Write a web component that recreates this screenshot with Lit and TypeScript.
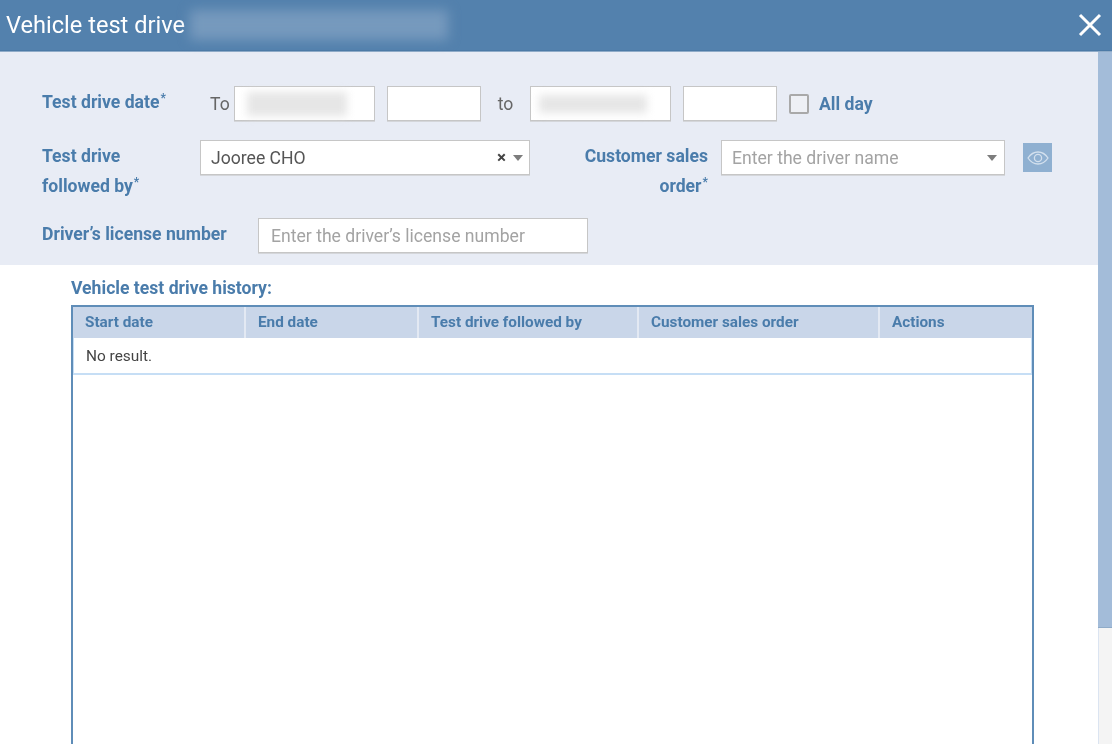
import { LitElement, html, css, svg } from "lit";
import { customElement } from "lit/decorators.js";

const caret = svg`<svg class="caret" width="10" height="6" viewBox="0 0 10 6"><path d="M0 0H10L5 6Z" fill="#7d7d7d"/></svg>`;

@customElement("app-root")
export class AppRoot extends LitElement {
  static styles = css`
    :host {
      display: flex;
      flex-direction: column;
      width: 1112px;
      height: 744px;
      overflow: hidden;
      background: #fff;
      font-family: Roboto, "Liberation Sans", sans-serif;
      color: #555;
      filter: blur(0.6px);
    }
    .header {
      flex: none;
      height: 51px;
      box-sizing: border-box;
      background: #5381ad;
      border-bottom: 1px solid #4c7aa6;
      display: flex;
      align-items: center;
      padding: 0 10px 0 6px;
      color: #fff;
      font-size: 23.6px;
    }
    .title-blur {
      width: 258px;
      height: 30px;
      margin-left: 5px;
      background: #7699bd;
      filter: blur(6px);
    }
    .close {
      margin-left: auto;
      display: block;
      background: none;
      border: 0;
      padding: 0;
      height: 24px;
    }
    .main {
      flex: 1;
      min-height: 0;
      display: flex;
      border-top: 1px solid #8fabc8;
    }
    .content {
      flex: 1;
      min-width: 0;
      overflow: hidden;
    }
    .scrollbar {
      flex: none;
      width: 14px;
      background: #f4f4f4;
      border-left: 1px solid #dbe4f1;
      box-sizing: border-box;
    }
    .thumb {
      height: 576px;
      margin-left: -1px;
      background: #a3bcd9;
      border-bottom: 1px solid #8fabc8;
      box-sizing: border-box;
    }
    .form {
      background: #e8ecf5;
      height: 213px;
      box-sizing: border-box;
      padding: 34px 0 0 42px;
    }
    .row {
      display: flex;
      align-items: flex-start;
    }
    .row1 {
      height: 35px;
      margin-bottom: 19px;
    }
    .row2 {
      height: 78px;
    }
    label {
      font-size: 17.6px;
      font-weight: 700;
      color: #4a7cab;
      line-height: 30px;
    }
    sup {
      font-size: 12px;
      line-height: 0;
      vertical-align: 6px;
      margin-left: 1px;
    }
    .l-date { width: 168px; margin-top: 1px; }
    .to {
      font-size: 17.6px;
      line-height: 36px;
      color: #666;
    }
    .to-a { width: 24px; }
    .to-b { width: 49px; text-align: center; }
    .field {
      box-sizing: border-box;
      height: 35px;
      background: #fff;
      border: 1px solid #c6c6c6;
      box-shadow: 0 1px 0 #d4d6da;
      display: flex;
      align-items: center;
      padding: 0 10px;
      font-size: 17.6px;
      color: #555;
    }
    .placeholder { color: #a3a3a3; }
    .date { width: 141px; }
    .date-gap { margin-right: 12px; }
    .time { width: 94px; }
    .blur-value {
      height: 24px;
      background: #e6e6e6;
      filter: blur(4px);
    }
    .bv1 { width: 100px; margin-left: 2px; }
    .bv2 { width: 108px; height: 18px; margin-left: -2px; }
    .check {
      box-sizing: border-box;
      width: 20px;
      height: 20px;
      margin: 8px 10px 0 12px;
      background: #eef0f5;
      border: 2px solid #a9a9a9;
      border-radius: 2px;
    }
    .allday { line-height: 36px; }
    .l-follow { width: 158px; margin-top: 1px; }
    .select-a { width: 330px; padding-right: 6px; }
    .grow { flex: 1; white-space: nowrap; }
    .x { font-size: 17px; font-weight: 700; color: #444; margin-right: 7px; line-height: 1; }
    .l-cust { width: 178px; text-align: right; margin-top: 1px; margin-right: 13px; white-space: nowrap; }
    .select-b { width: 284px; padding-right: 7px; }
    .eye {
      box-sizing: border-box;
      width: 29px;
      height: 29px;
      margin: 3px 0 0 18px;
      padding: 0;
      border: 0;
      background: #8fb0d1;
      display: flex;
      align-items: center;
      justify-content: center;
    }
    .l-lic { width: 216px; margin-top: 1px; white-space: nowrap; }
    .lic { width: 330px; padding-left: 12px; white-space: nowrap; }
    .history {
      padding: 8px 0 0 71px;
    }
    .h-title {
      font-size: 17.6px;
      font-weight: 700;
      color: #4a7cab;
      line-height: 30px;
      margin-bottom: 2px;
    }
    .table {
      box-sizing: border-box;
      width: 963px;
      height: 560px;
      border: 2px solid #5f8db8;
      border-bottom: 0;
    }
    .thead {
      display: grid;
      grid-template-columns: 173px 173px 220px 241px 1fr;
      background: #c9d6e9;
      height: 31px;
    }
    .th {
      box-sizing: border-box;
      border-right: 2px solid #e3e9f3;
      padding-left: 12px;
      font-size: 15.3px;
      font-weight: 700;
      color: #4a7cab;
      line-height: 31px;
      white-space: nowrap;
    }
    .th:last-child { border-right: 0; }
    .tr {
      height: 37px;
      box-sizing: border-box;
      border: 1px solid #c6def5;
      border-top: 0;
      border-bottom-width: 2px;
      padding-left: 12px;
      font-size: 15.4px;
      line-height: 36px;
      color: #444;
    }
  `;

  render() {
    return html`
      <div class="header">
        <span>Vehicle test drive</span>
        <div class="title-blur"></div>
        <button class="close" aria-label="Close">
          <svg width="24" height="24" viewBox="0 0 24 24">
            <path d="M2 2L22 22M22 2L2 22" stroke="#fff" stroke-width="3" fill="none" />
          </svg>
        </button>
      </div>
      <div class="main">
        <div class="content">
          <div class="form">
            <div class="row row1">
              <label class="l-date">Test drive date<sup>*</sup></label>
              <span class="to to-a">To</span>
              <div class="field date date-gap"><div class="blur-value bv1"></div></div>
              <div class="field time"></div>
              <span class="to to-b">to</span>
              <div class="field date date-gap"><div class="blur-value bv2"></div></div>
              <div class="field time"></div>
              <div class="check"></div>
              <label class="allday">All day</label>
            </div>
            <div class="row row2">
              <label class="l-follow">Test drive<br />followed by<sup>*</sup></label>
              <div class="field select-a">
                <span class="grow">Jooree CHO</span>
                <span class="x">×</span>
                ${caret}
              </div>
              <label class="l-cust">Customer sales<br />order<sup>*</sup></label>
              <div class="field select-b">
                <span class="grow placeholder">Enter the driver name</span>
                ${caret}
              </div>
              <button class="eye" aria-label="View">
                <svg width="22" height="14" viewBox="0 0 22 14" fill="none" stroke="#d3e0ee" stroke-width="1.3">
                  <path d="M1 7C4 2.5 7.5 1 11 1S18 2.5 21 7C18 11.5 14.5 13 11 13S4 11.5 1 7Z" />
                  <circle cx="11" cy="7" r="3.6" />
                </svg>
              </button>
            </div>
            <div class="row">
              <label class="l-lic">Driver’s license number</label>
              <div class="field lic placeholder">Enter the driver’s license number</div>
            </div>
          </div>
          <div class="history">
            <div class="h-title">Vehicle test drive history:</div>
            <div class="table">
              <div class="thead">
                <div class="th">Start date</div>
                <div class="th">End date</div>
                <div class="th">Test drive followed by</div>
                <div class="th">Customer sales order</div>
                <div class="th">Actions</div>
              </div>
              <div class="tr">No result.</div>
            </div>
          </div>
        </div>
        <div class="scrollbar"><div class="thumb"></div></div>
      </div>
    `;
  }
}
